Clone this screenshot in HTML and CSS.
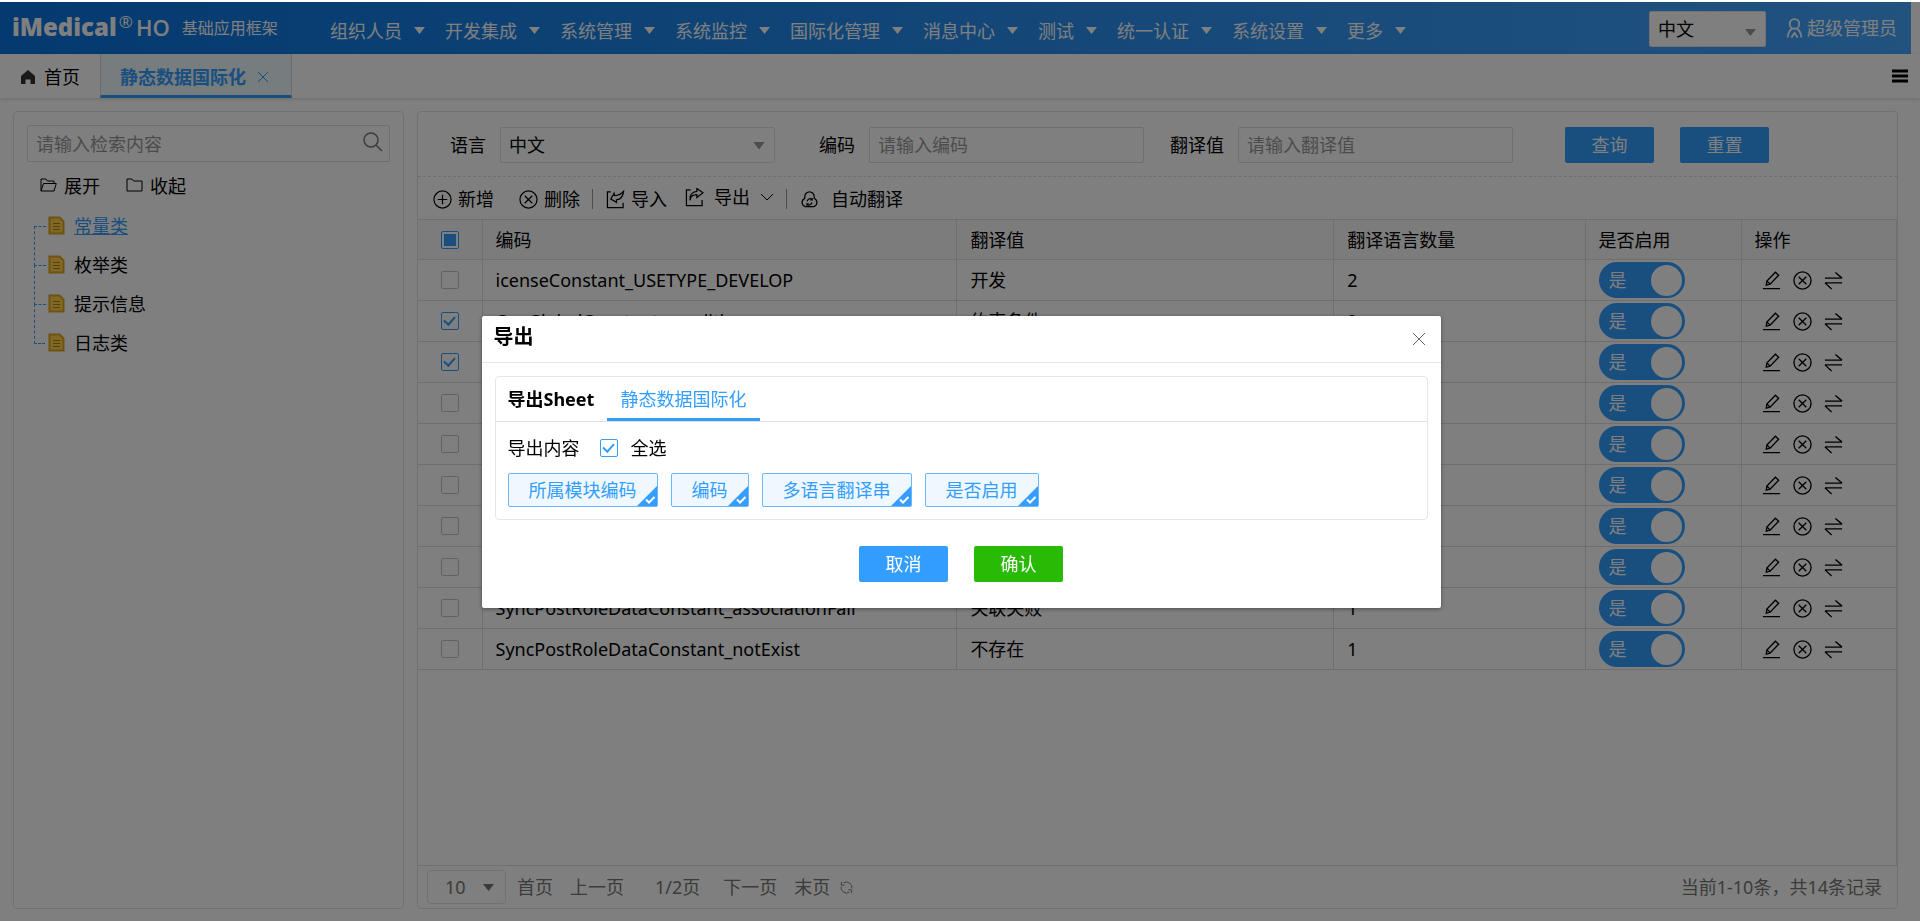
FILE: index.html
```
<!DOCTYPE html>
<html lang="zh-CN">
<head>
<meta charset="utf-8">
<title>静态数据国际化</title>
<link rel="stylesheet" href="styles.css">
</head>
<body>
<svg class="defs" aria-hidden="true">
  <symbol id="i-edit" viewBox="0 0 20 20"><path d="M1 18.5h18M4.5 14.8l.6-4.3 9-9.2 3.4 3.2-9 9.3zM5.2 10.6l3.3 3.2" /></symbol>
  <symbol id="i-cancel" viewBox="0 0 20 20"><circle cx="10" cy="10" r="9"/><path d="M6 6l8 8M14 6l-8 8"/></symbol>
  <symbol id="i-swap" viewBox="0 0 20 20"><path d="M1 7.5h18M19 7.5l-7-6M19 12.5H1M1 12.5l7 6.5"/></symbol>
  <symbol id="i-add" viewBox="0 0 20 20"><circle cx="10" cy="10" r="9"/><path d="M10 5v10M5 10h10"/></symbol>
  <symbol id="i-import" viewBox="0 0 20 20"><path d="M5 2H1.500v16.500h16.500V13.500M8.500 3.500L5 9.500l6 3.500v-2.500c4-.5 7-4 7.500-9-2.500 3-5.500 4.200-9.500 4.500z"/></symbol>
  <symbol id="i-export" viewBox="0 0 20 20"><path d="M6 2H1.500v16.500h16.500V12.500M5.500 13c0-4.500 3-6 7-6v3l6.500-5-6.500-4.500v3C7 4 4.500 8 5.500 13z"/></symbol>
  <symbol id="i-cloud" viewBox="0 0 20 20"><path d="M5 9V7a5 5 0 0 1 10 0v2a4.500 4.500 0 0 1-.5 8.500h-9A4.500 4.500 0 0 1 5 9z"/><path d="M7.500 12a3 3 0 0 1 5-2M12.500 13a3 3 0 0 1-5 2M12.800 8.500v2h-2M7.200 16.500v-2h2"/></symbol>
  <symbol id="i-file" viewBox="0 0 17 19"><path d="M1.500 1.500h10l4 4v12h-14z" fill="#ffd24a" stroke="#dfa520" stroke-width="2"/><path d="M5 7.500h7M5 10.500h7M5 13.500h7" stroke="#b47d0a"/></symbol>
</svg>

<div class="app">
  <header class="topbar">
    <div class="brand"><span class="brand-name">iMedical</span><sup class="brand-reg">®</sup><span class="brand-ho">HO</span><span class="brand-sub">基础应用框架</span></div>
    <nav class="menu">
      <a href="#">组织人员</a><a href="#">开发集成</a><a href="#">系统管理</a><a href="#">系统监控</a><a href="#">国际化管理</a><a href="#">消息中心</a><a href="#">测试</a><a href="#">统一认证</a><a href="#">系统设置</a><a href="#">更多</a>
    </nav>
    <div class="topbar-right">
      <span class="picker picker-lang"><select aria-label="界面语言"><option>中文</option></select></span>
      <a class="user" href="#"><svg viewBox="0 0 17 22"><circle cx="8.500" cy="6.500" r="5.300"/><path d="M6 11.500C3 13.500 1.200 17 1 21.500M11 11.500c3 2 4.800 5.500 5 10M5 21.500l3.500-5 3.500 5"/></svg>超级管理员</a>
    </div>
  </header>

  <div class="tabs">
    <a class="tab-home" href="#"><svg viewBox="0 0 14 14"><path d="M7 0l7 6v8H9.500V9.500h-5V14H0V6z"/></svg>首页</a>
    <div class="tab-active"><span>静态数据国际化</span><button class="tab-close" aria-label="关闭标签"><svg viewBox="0 0 10 10"><path d="M0 0l10 10M10 0L0 10"/></svg></button></div>
    <button class="tabs-more" aria-label="更多标签"><svg viewBox="0 0 16 14"><path d="M0 2h16M0 7h16M0 12h16"/></svg></button>
  </div>

  <main class="content">
    <aside class="panel side">
      <div class="search">
        <input type="text" placeholder="请输入检索内容" aria-label="检索">
        <button aria-label="搜索"><svg viewBox="0 0 20 20"><circle cx="8" cy="8" r="7"/><path d="M13 13l6 6"/></svg></button>
      </div>
      <div class="side-tools">
        <button><svg viewBox="0 0 17 14"><path d="M1 13V1h5l1.500 2H14v2.500M1 13L3.500 5.500h12.800L14 13z"/></svg>展开</button>
        <button><svg viewBox="0 0 17 14"><path d="M1 13V1h5l1.500 2H16v10z"/></svg>收起</button>
      </div>
      <ul class="tree">
        <li><svg><use href="#i-file"/></svg><a class="on" href="#">常量类</a></li>
        <li><svg><use href="#i-file"/></svg><a href="#">枚举类</a></li>
        <li><svg><use href="#i-file"/></svg><a href="#">提示信息</a></li>
        <li><svg><use href="#i-file"/></svg><a href="#">日志类</a></li>
      </ul>
    </aside>

    <section class="panel main">
      <form class="query">
        <label for="q-lang">语言</label><span class="picker picker-form"><select id="q-lang"><option>中文</option></select></span>
        <label for="q-code">编码</label><input id="q-code" type="text" placeholder="请输入编码">
        <label for="q-val">翻译值</label><input id="q-val" type="text" placeholder="请输入翻译值">
        <div class="query-actions"><button type="button" class="btn">查询</button><button type="button" class="btn">重置</button></div>
      </form>

      <div class="toolbar">
        <button class="t-add"><svg><use href="#i-add"/></svg>新增</button>
        <button class="t-del"><svg><use href="#i-cancel"/></svg>删除</button>
        <i class="sep"></i>
        <button class="t-imp"><svg><use href="#i-import"/></svg>导入</button>
        <button class="t-exp"><svg><use href="#i-export"/></svg>导出<svg class="chev" viewBox="0 0 14 8"><path d="M1 1l6 6 6-6"/></svg></button>
        <i class="sep"></i>
        <button class="t-auto"><svg><use href="#i-cloud"/></svg>自动翻译</button>
      </div>

      <div class="grid">
        <table>
          <colgroup><col class="c-check"><col class="c-code"><col class="c-val"><col class="c-num"><col class="c-on"><col class="c-op"></colgroup>
          <thead><tr><th><input type="checkbox" class="cb partial" aria-label="全选"></th><th>编码</th><th>翻译值</th><th>翻译语言数量</th><th>是否启用</th><th>操作</th></tr></thead>
          <tbody>
            <tr><td><input type="checkbox" class="cb" aria-label="选择"></td><td>icenseConstant_USETYPE_DEVELOP</td><td>开发</td><td>2</td><td><label class="switch"><input type="checkbox" checked><span>是</span></label></td><td><div class="ops"><button aria-label="编辑"><svg><use href="#i-edit"/></svg></button><button aria-label="删除"><svg><use href="#i-cancel"/></svg></button><button aria-label="翻译"><svg><use href="#i-swap"/></svg></button></div></td></tr>
            <tr><td><input type="checkbox" class="cb" checked aria-label="选择"></td><td>OrgGlobalConstant_condition</td><td>约束条件</td><td>2</td><td><label class="switch"><input type="checkbox" checked><span>是</span></label></td><td><div class="ops"><button aria-label="编辑"><svg><use href="#i-edit"/></svg></button><button aria-label="删除"><svg><use href="#i-cancel"/></svg></button><button aria-label="翻译"><svg><use href="#i-swap"/></svg></button></div></td></tr>
            <tr><td><input type="checkbox" class="cb" checked aria-label="选择"></td><td></td><td></td><td></td><td><label class="switch"><input type="checkbox" checked><span>是</span></label></td><td><div class="ops"><button aria-label="编辑"><svg><use href="#i-edit"/></svg></button><button aria-label="删除"><svg><use href="#i-cancel"/></svg></button><button aria-label="翻译"><svg><use href="#i-swap"/></svg></button></div></td></tr>
            <tr><td><input type="checkbox" class="cb" aria-label="选择"></td><td></td><td></td><td></td><td><label class="switch"><input type="checkbox" checked><span>是</span></label></td><td><div class="ops"><button aria-label="编辑"><svg><use href="#i-edit"/></svg></button><button aria-label="删除"><svg><use href="#i-cancel"/></svg></button><button aria-label="翻译"><svg><use href="#i-swap"/></svg></button></div></td></tr>
            <tr><td><input type="checkbox" class="cb" aria-label="选择"></td><td></td><td></td><td></td><td><label class="switch"><input type="checkbox" checked><span>是</span></label></td><td><div class="ops"><button aria-label="编辑"><svg><use href="#i-edit"/></svg></button><button aria-label="删除"><svg><use href="#i-cancel"/></svg></button><button aria-label="翻译"><svg><use href="#i-swap"/></svg></button></div></td></tr>
            <tr><td><input type="checkbox" class="cb" aria-label="选择"></td><td></td><td></td><td></td><td><label class="switch"><input type="checkbox" checked><span>是</span></label></td><td><div class="ops"><button aria-label="编辑"><svg><use href="#i-edit"/></svg></button><button aria-label="删除"><svg><use href="#i-cancel"/></svg></button><button aria-label="翻译"><svg><use href="#i-swap"/></svg></button></div></td></tr>
            <tr><td><input type="checkbox" class="cb" aria-label="选择"></td><td></td><td></td><td></td><td><label class="switch"><input type="checkbox" checked><span>是</span></label></td><td><div class="ops"><button aria-label="编辑"><svg><use href="#i-edit"/></svg></button><button aria-label="删除"><svg><use href="#i-cancel"/></svg></button><button aria-label="翻译"><svg><use href="#i-swap"/></svg></button></div></td></tr>
            <tr><td><input type="checkbox" class="cb" aria-label="选择"></td><td></td><td></td><td></td><td><label class="switch"><input type="checkbox" checked><span>是</span></label></td><td><div class="ops"><button aria-label="编辑"><svg><use href="#i-edit"/></svg></button><button aria-label="删除"><svg><use href="#i-cancel"/></svg></button><button aria-label="翻译"><svg><use href="#i-swap"/></svg></button></div></td></tr>
            <tr><td><input type="checkbox" class="cb" aria-label="选择"></td><td>SyncPostRoleDataConstant_associationFail</td><td>关联失败</td><td>1</td><td><label class="switch"><input type="checkbox" checked><span>是</span></label></td><td><div class="ops"><button aria-label="编辑"><svg><use href="#i-edit"/></svg></button><button aria-label="删除"><svg><use href="#i-cancel"/></svg></button><button aria-label="翻译"><svg><use href="#i-swap"/></svg></button></div></td></tr>
            <tr><td><input type="checkbox" class="cb" aria-label="选择"></td><td>SyncPostRoleDataConstant_notExist</td><td>不存在</td><td>1</td><td><label class="switch"><input type="checkbox" checked><span>是</span></label></td><td><div class="ops"><button aria-label="编辑"><svg><use href="#i-edit"/></svg></button><button aria-label="删除"><svg><use href="#i-cancel"/></svg></button><button aria-label="翻译"><svg><use href="#i-swap"/></svg></button></div></td></tr>
          </tbody>
        </table>
      </div>

      <footer class="pager">
        <span class="picker picker-page"><select aria-label="每页条数"><option>10</option></select></span>
        <button>首页</button><button>上一页</button><span class="page-no">1/2页</span><button>下一页</button><button>末页</button>
        <button class="reload" aria-label="刷新"><svg viewBox="0 0 14 14"><path d="M12.800 8A6 6 0 0 0 4 1.800M1.200 6A6 6 0 0 0 10 12.200M1.500 1v3.500H5M12.500 13V9.500H9"/></svg></button>
        <span class="total">当前1-10条，共14条记录</span>
      </footer>
    </section>
  </main>
</div>

<div class="mask">
  <section class="dialog" role="dialog" aria-modal="true" aria-labelledby="dlg-title">
    <header class="dialog-head">
      <h2 id="dlg-title">导出</h2>
      <button class="dialog-close" aria-label="关闭"><svg viewBox="0 0 12 12"><path d="M0 0l12 12M12 0L0 12"/></svg></button>
    </header>
    <div class="sheet">
      <div class="sheet-tabs"><strong>导出Sheet</strong><button class="sheet-tab">静态数据国际化</button></div>
      <div class="sheet-body">
        <div class="sheet-row"><span>导出内容</span><input type="checkbox" class="cb" id="all" checked><label for="all">全选</label></div>
        <div class="tags">
          <button class="tag">所属模块编码<svg viewBox="0 0 20 20"><path d="M20 0v20H0z"/><path class="tick" d="M9 13.500l3 3 5.500-5.500"/></svg></button>
          <button class="tag">编码<svg viewBox="0 0 20 20"><path d="M20 0v20H0z"/><path class="tick" d="M9 13.500l3 3 5.500-5.500"/></svg></button>
          <button class="tag">多语言翻译串<svg viewBox="0 0 20 20"><path d="M20 0v20H0z"/><path class="tick" d="M9 13.500l3 3 5.500-5.500"/></svg></button>
          <button class="tag">是否启用<svg viewBox="0 0 20 20"><path d="M20 0v20H0z"/><path class="tick" d="M9 13.500l3 3 5.500-5.500"/></svg></button>
        </div>
      </div>
    </div>
    <div class="dialog-actions"><button class="btn">取消</button><button class="btn ok">确认</button></div>
  </section>
</div>
</body>
</html>
```
FILE: styles.css
```
* { box-sizing: border-box; }
body {
  margin: 0;
  font: 18px/24px "Noto Sans", "Noto Sans CJK SC", sans-serif;
  color: #000;
  background: #fff;
}
button, input, select { font: inherit; color: inherit; margin: 0; }
button { border: 0; padding: 0; background: none; cursor: pointer; white-space: nowrap; }
a { color: inherit; text-decoration: none; }
svg { fill: none; stroke: currentColor; flex: none; display: block; }
.defs { position: absolute; width: 0; height: 0; }

.app { display: flex; flex-direction: column; height: 100vh; padding-top: 2px; }

/* top bar */
.topbar {
  display: flex;
  height: 52px;
  margin-right: 9px;
  color: #fff;
  background: linear-gradient(90deg, #0874e0, #44a6ff);
}
.brand { display: flex; align-items: center; width: 317px; padding: 0 0 2px 12px; }
.brand-name { font: 800 24px/24px "Open Sans", sans-serif; }
.brand-reg { font: 400 17px/16px "Open Sans", sans-serif; align-self: flex-start; margin: 12px 3px 0 2px; }
.brand-ho { font: 600 22px/24px "Open Sans", sans-serif; }
.brand-sub { font-size: 16px; margin-left: 12px; padding-top: 2px; }
.menu { display: flex; flex: 1; gap: 20px; padding: 17px 0 0 13px; }
.menu a { display: flex; gap: 12px; white-space: nowrap; }
.menu a::after {
  content: ""; margin-top: 8px; width: 11px; height: 7px;
  background: #fff; clip-path: polygon(0 0, 100% 0, 50% 100%);
}
.topbar-right { display: flex; align-items: flex-start; padding: 9px 14px 0 0; gap: 20px; }
.user { display: flex; align-items: center; gap: 4px; padding-top: 5px; }
.user svg { width: 17px; height: 20px; stroke-width: 2; }

/* selects */
.picker { position: relative; display: block; }
.picker select {
  appearance: none; width: 100%; height: 100%; padding: 0 8px;
  border: 1px solid #e2e2e2; border-radius: 2px; background: #fff; outline: 0;
}
.picker::after {
  content: ""; position: absolute; right: 10px; top: 15px; width: 11px; height: 7px;
  background: #999; clip-path: polygon(0 0, 100% 0, 50% 100%); pointer-events: none;
}
.picker-lang { width: 117px; height: 36px; color: #000; }
.picker-lang::after { top: 18px; }
.picker-form { width: 275px; height: 36px; }

/* page tabs */
.tabs { display: flex; flex: none; height: 44px; background: #fff; box-shadow: 0 1px 4px rgba(0, 0, 0, .16); }
.tab-home { display: flex; align-items: center; gap: 9px; width: 100px; padding-left: 21px; padding-top: 1px; }
.tab-home svg { width: 14px; height: 14px; fill: #333; stroke: none; }
.tab-active {
  display: flex; align-items: center; gap: 12px; width: 192px; padding: 4px 0 0 19px;
  color: #339eff; font-weight: 700; background: #eef9ff;
  border-bottom: 3px solid #339eff; border-left: 1px solid #dadada; border-right: 1px solid #dadada;
}
.tab-close svg { width: 10px; height: 10px; }
.tabs-more { margin-left: auto; padding: 0 12px 0 0; }
.tabs-more svg { width: 16px; height: 14px; stroke: #000; stroke-width: 3; }

/* layout */
.content { display: flex; flex: 1; min-height: 0; gap: 13px; padding: 13px 22px 13px 13px; }
.panel { border: 1px solid #e2e2e2; border-radius: 4px; background: #fff; }
.side { width: 391px; flex: none; padding: 13px; }
.search { display: flex; height: 37px; border: 1px solid #dcdcdc; border-radius: 2px; }
.search input { flex: 1; min-width: 0; border: 0; padding: 0 8px; background: none; outline: 0; }
.search svg { width: 20px; height: 20px; margin: 0 6px 4px 0; stroke: #777; stroke-width: 1.5; }
::placeholder { color: #999; opacity: 1; }
.side-tools { display: flex; gap: 26px; padding: 12px 13px 0; }
.side-tools button { display: flex; align-items: center; gap: 7px; }
.side-tools svg { width: 17px; height: 14px; margin-bottom: 3px; }
.tree { list-style: none; margin: 8px 0 0 7px; padding: 0; }
.tree li { position: relative; display: flex; align-items: center; height: 39px; padding-left: 14px; gap: 9px; }
.tree li::before {
  content: ""; position: absolute; left: 0; top: 20px; width: 11px; height: 39px;
  border-left: 1px dashed #339eff; border-top: 1px dashed #339eff;
}
.tree li:last-child::before { height: 0; border-left: 0; }
.tree svg { width: 17px; height: 19px; }
.tree .on { color: #339eff; text-decoration: underline; }

.main { flex: 1; min-width: 0; display: flex; flex-direction: column; }
.query {
  display: flex; flex: none; align-items: center; height: 65px; padding: 1px 0 0 32px;
  border-bottom: 1px dashed #dcdcdc;
}
.query label { margin-right: 14px; white-space: nowrap; }
.query .picker { margin-right: 44px; }
.query input { width: 275px; height: 36px; padding: 0 8px; border: 1px solid #dcdce2; border-radius: 2px; outline: 0; background: #fff; }
.query #q-code { margin-right: 26px; }
.picker-form::after { width: 12px; height: 8px; }
.query-actions { display: flex; gap: 26px; margin-left: 52px; }
.btn { width: 89px; height: 36px; color: #fff; background: #339eff; border-radius: 2px; }

.toolbar { display: flex; flex: none; align-items: center; height: 42px; padding: 2px 0 0 15px; }
.toolbar button { display: flex; align-items: center; gap: 6px; }
.toolbar svg { width: 19px; height: 19px; stroke-width: 1.3; }
.toolbar .t-add { margin-right: 25px; }
.toolbar .t-del { margin-right: 12px; }
.toolbar .t-imp { margin: 0 18px 0 13px; }
.toolbar .t-exp { margin: 0 12px 4px 0; gap: 10px; }
.toolbar .t-auto { margin-left: 13px; gap: 12px; }
.toolbar .chev { width: 14px; height: 8px; stroke-width: 1; }
.sep { width: 1px; height: 20px; background: #999; }

/* data grid */
.grid { flex: 1; min-height: 0; border-right: 1px solid #e2e2e2; overflow: hidden; }
table { width: 100%; border-collapse: collapse; table-layout: fixed; border-top: 1px solid #dedede; }
.c-check { width: 64px; }
.c-val { width: 25.5%; }
.c-num { width: 17%; }
.c-on { width: 156px; }
.c-op { width: 155px; }
th, td {
  height: 41px; padding: 0 13px; text-align: left; font-weight: 400;
  border-right: 1px solid #dedede; border-bottom: 1px solid #dedede; white-space: nowrap;
}
th { height: 40px; background: #f8f8f8; }
th:last-child, td:last-child { border-right: 0; }
th:first-child, td:first-child { text-align: center; padding: 0; }
.cb {
  appearance: none; display: grid; place-items: center;
  width: 18px; height: 18px; border: 1px solid #c4c4c4; border-radius: 2px; background: #fff;
}
table .cb { margin: 0 auto; }
.cb:checked, .cb.partial { border-color: #339eff; }
.cb:checked::after {
  content: ""; width: 5px; height: 9px; margin-bottom: 3px; transform: rotate(42deg);
  border-right: 2px solid #339eff; border-bottom: 2px solid #339eff;
}
.cb.partial::after { content: ""; width: 12px; height: 12px; background: #339eff; }
.switch { position: relative; display: block; width: 86px; height: 36px; }
.switch input { position: absolute; opacity: 0; }
.switch span {
  display: flex; align-items: center; justify-content: space-between; height: 36px;
  padding: 0 3px 0 10px; border-radius: 18px; color: #fff; background: #339eff;
}
.switch span::after { content: ""; width: 31px; height: 31px; border-radius: 50%; background: #fff; }
.ops { display: flex; gap: 12px; padding-left: 7px; }
.ops svg { width: 19px; height: 19px; stroke-width: 1.4; }

.pager {
  display: flex; flex: none; align-items: center; height: 43px; padding: 0 15px 0 9px;
  color: #777; border-top: 1px solid #dedede;
}
.pager button { margin-right: 17px; }
.picker-page { width: 79px; height: 34px; margin-right: 11px; }
.picker-page select { padding: 0 17px; border-radius: 4px; }
.picker-page::after { right: 12px; top: 14px; background: #777; }
.page-no { margin: 0 23px 0 14px; }
.pager .page-no + button + button { margin-right: 10px; }
.reload svg { width: 13px; height: 13px; }
.total { margin-left: auto; }

/* export dialog */
.mask {
  position: fixed; inset: 2px 0 1px; display: flex; justify-content: center; align-items: center;
  padding-left: 2px; background: rgba(0, 0, 0, .5);
}
.dialog { width: 50%; min-width: 640px; background: #fff; border-radius: 2px; box-shadow: 0 1px 4px rgba(0, 0, 0, .4); }
.dialog-head {
  display: flex; justify-content: space-between; align-items: center; height: 47px;
  padding: 1px 16px 0 12px; border-bottom: 1px solid #e6e6e6;
}
.dialog-head h2 { margin: 0 0 4px; font-size: 20px; font-weight: 700; }
.dialog-close svg { width: 12px; height: 12px; stroke: #666; }
.sheet { margin: 13px 13px 0; border: 1px solid #e6e6e6; border-radius: 4px; }
.sheet-tabs { display: flex; height: 45px; padding-left: 12px; border-bottom: 1px solid #e0e0e0; }
.sheet-tabs strong { font-weight: 700; line-height: 45px; margin-right: 13px; }
.sheet-tab { padding: 3px 14px 0 13px; color: #339eff; border-bottom: 3px solid #339eff; }
.sheet-body { padding: 14px 12px 12px; }
.sheet-row { display: flex; align-items: center; }
.sheet-row .cb { margin: 0 13px 0 20px; }
.tags { display: flex; gap: 13px; margin-top: 13px; }
.tag {
  position: relative; height: 34px; padding: 0 20px; color: #339eff;
  background: #f0f8ff; border: 1px solid #6bb6ff; border-radius: 2px;
}
.tag svg { position: absolute; right: 0; bottom: 0; width: 20px; height: 20px; fill: #339eff; stroke: none; }
.tag .tick { fill: none; stroke: #fff; stroke-width: 2; }
.dialog-actions { display: flex; justify-content: center; gap: 26px; padding: 26px 0; }
.ok { background: #28ba05; }
```
